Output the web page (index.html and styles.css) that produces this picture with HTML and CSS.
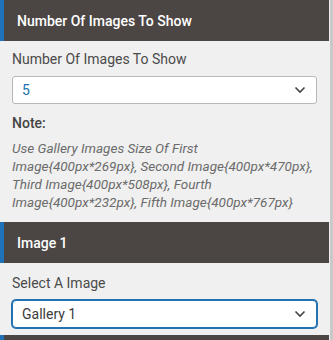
FILE: index.html
```html
<!DOCTYPE html>
<html lang="en">

<head>
    <meta charset="UTF-8">
    <meta name="viewport" content="width=device-width, initial-scale=1.0">
    <title>Gallery Settings</title>
    <link rel="stylesheet" href="styles.css">
</head>

<body>
    <div class="page">
        <div class="panel">
            <div class="section-head">Number Of Images To Show</div>
            <div class="section-body first">
                <label class="field-label">Number Of Images To Show</label>
                <div class="select">
                    <span class="select-value accent">5</span>
                    <svg class="chevron" width="12" height="8" viewBox="0 0 12 8"><path d="M1.5 1.5 L6 6 L10.5 1.5" fill="none" stroke="#444" stroke-width="1.6"/></svg>
                </div>
                <div class="note-title">Note:</div>
                <p class="note">Use Gallery Images Size Of First Image{400px*269px}, Second Image{400px*470px}, Third Image{400px*508px}, Fourth Image{400px*232px}, Fifth Image{400px*767px}</p>
            </div>

            <div class="section-head">Image 1</div>
            <div class="section-body second">
                <label class="field-label">Select A Image</label>
                <div class="select focused">
                    <span class="select-value">Gallery 1</span>
                    <svg class="chevron" width="12" height="8" viewBox="0 0 12 8"><path d="M1.5 1.5 L6 6 L10.5 1.5" fill="none" stroke="#444" stroke-width="1.6"/></svg>
                </div>
            </div>

            <div class="section-head"></div>
        </div>
        <div class="scrollbar"></div>
    </div>
</body>

</html>
```

FILE: styles.css
```css
body {
    font-family: Roboto, 'Liberation Sans', sans-serif;
    margin: 0;
    padding: 0;
    background: #f0f0f0;
}

.page {
    display: flex;
    height: 340px;
    overflow: hidden;
}

.panel {
    width: 329px;
}

.scrollbar {
    width: 3px;
    margin-left: 1px;
    background: #c9c9c9;
}

.section-head {
    display: flex;
    align-items: center;
    height: 41px;
    border-left: 4px solid #1f72b8;
    padding-left: 13px;
    background: #4b4644;
    color: #fff;
    font-size: 14px;
    font-weight: 500;
}

.section-body {
    padding: 9px 12px 11px;
}

.section-body.second {
    padding-top: 11px;
    padding-bottom: 7px;
}

.field-label {
    display: block;
    font-size: 14px;
    line-height: 18px;
    color: #4a4a4a;
    margin-bottom: 8px;
}

.select {
    display: flex;
    align-items: center;
    justify-content: space-between;
    height: 26px;
    padding: 0 8px 0 9px;
    background: #fff;
    border: 1px solid #b8b8b8;
    border-radius: 3px;
    font-size: 14px;
    color: #3c3c3c;
}

.select.focused {
    border-color: #2271b1;
    box-shadow: 0 0 0 1px #2271b1;
    border-radius: 4px;
}

.accent {
    color: #2271b1;
}

.chevron {
    margin-right: 2px;
}

.note-title {
    margin-top: 11px;
    font-size: 14px;
    line-height: 17px;
    font-weight: 500;
    color: #444;
}

.note {
    margin: 7px 0 0;
    font-size: 13.5px;
    line-height: 18px;
    font-style: italic;
    color: #6b6b6b;
}
```
